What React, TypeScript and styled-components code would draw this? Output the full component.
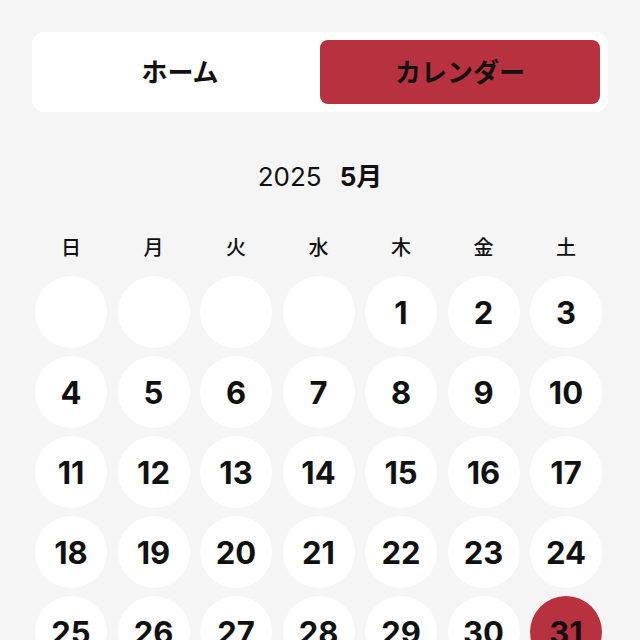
import React from 'react';
import styled, { createGlobalStyle } from 'styled-components';

const GlobalStyle = createGlobalStyle`
  body {
    margin: 0;
    background: #f5f5f5;
    font-family: Inter, "Noto Sans CJK JP", sans-serif;
    color: #111;
  }
`;

const Page = styled.div`
  padding: 32px 32px 0;
`;

const TabBar = styled.div`
  display: flex;
  background: #fff;
  border-radius: 12px;
  padding: 8px;
`;

const Tab = styled.button<{ $active?: boolean }>`
  flex: 1;
  height: 64px;
  padding: 0 0 4px;
  border: none;
  border-radius: 8px;
  background: ${(p) => (p.$active ? '#b7313f' : 'transparent')};
  color: #111;
  font-family: inherit;
  font-size: 26px;
  font-weight: 700;
  cursor: pointer;
`;

const MonthTitle = styled.div`
  display: flex;
  justify-content: center;
  align-items: baseline;
  gap: 18px;
  margin-top: 49px;
  height: 32px;
  line-height: 32px;
`;

const Year = styled.span`
  font-size: 26px;
  font-weight: 400;
`;

const Month = styled.span`
  font-size: 26px;
  font-weight: 700;
`;

const Grid = styled.div`
  display: grid;
  grid-template-columns: repeat(7, 72px);
  column-gap: 10.5px;
  row-gap: 8px;
  margin-left: 3px;
`;

const WeekRow = styled(Grid)`
  margin-top: 43px;
  margin-bottom: 16px;
`;

const WeekDay = styled.div`
  text-align: center;
  font-size: 20px;
  font-weight: 500;
  line-height: 24px;
`;

const Day = styled.div<{ $selected?: boolean }>`
  width: 72px;
  height: 72px;
  border-radius: 50%;
  background: ${(p) => (p.$selected ? '#b7313f' : '#fff')};
  display: flex;
  align-items: center;
  justify-content: center;
  font-size: 31px;
  font-weight: 700;
`;

const weekDays = ['日', '月', '火', '水', '木', '金', '土'];

const App: React.FC = () => {
  const offset = 4; // 2025年5月1日は木曜日
  const cells: (number | null)[] = [
    ...Array(offset).fill(null),
    ...Array.from({ length: 31 }, (_, i) => i + 1),
  ];

  return (
    <Page>
      <GlobalStyle />
      <TabBar>
        <Tab>ホーム</Tab>
        <Tab $active>カレンダー</Tab>
      </TabBar>
      <MonthTitle>
        <Year>2025</Year>
        <Month>5月</Month>
      </MonthTitle>
      <WeekRow>
        {weekDays.map((d) => (
          <WeekDay key={d}>{d}</WeekDay>
        ))}
      </WeekRow>
      <Grid>
        {cells.map((d, i) => (
          <Day key={i} $selected={d === 31}>
            {d ?? ''}
          </Day>
        ))}
      </Grid>
    </Page>
  );
};

export default App;
